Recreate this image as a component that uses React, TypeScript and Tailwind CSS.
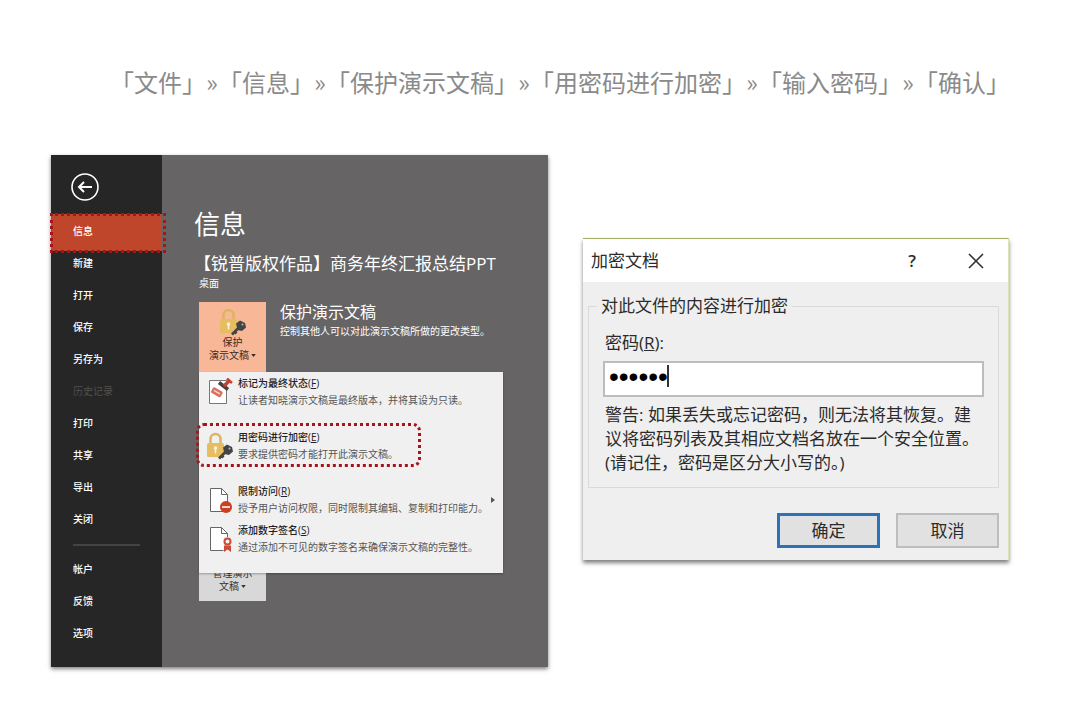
import type { ReactNode } from 'react';

const steps = ['文件', '信息', '保护演示文稿', '用密码进行加密', '输入密码', '确认'];

const mainNav = [
  '信息',
  '新建',
  '打开',
  '保存',
  '另存为',
  '历史记录',
  '打印',
  '共享',
  '导出',
  '关闭',
];
const footNav = ['帐户', '反馈', '选项'];

export default function App() {
  return (
    <div className="min-h-screen bg-white pl-[51px] pr-[71px] pt-16 pb-9 font-['Open_Sans','Noto_Sans_CJK_SC',sans-serif]">
      <Breadcrumb />
      <main className="mt-[55px] grid grid-cols-[497fr_426fr] items-start gap-[35px]">
        <Backstage />
        <EncryptDialog />
      </main>
    </div>
  );
}

function Breadcrumb() {
  return (
    <ol className="flex pl-[59px] font-['Noto_Sans_CJK_SC',sans-serif] text-2xl/9 whitespace-nowrap text-[#8a8a8a]">
      {steps.map((step, i) => (
        <li key={step} className="flex">
          {i > 0 && <span className="flex w-3 justify-center">»</span>}
          <span>「{step}」</span>
        </li>
      ))}
    </ol>
  );
}

function Backstage() {
  return (
    <section className="flex bg-[#666465] text-[10px] text-white shadow-[0_2px_4px_rgba(0,0,0,0.5)]">
      <Sidebar />
      <div className="min-w-0 flex-1 pt-[51px] pl-8">
        <h1 className="text-[26px]/9">信息</h1>
        <h2 className="mt-2.5 text-[17px]/6 whitespace-nowrap">
          【锐普版权作品】商务年终汇报总结PPT
        </h2>
        <div className="pl-[5px]">
          <p className="leading-[14px]">桌面</p>
          <div className="mt-3 flex gap-3.5">
            <div className="relative shrink-0">
              <button className="flex h-[70px] w-[67px] flex-col items-center bg-[#f8b797] pt-1.5 leading-[13px] text-[#3a2a22]">
                <LockIcon className="size-7" />
                <span>保护</span>
                <span className="flex items-center gap-0.5">
                  演示文稿 <Caret />
                </span>
              </button>
              <ProtectMenu />
            </div>
            <div className="whitespace-nowrap">
              <h3 className="text-base/5">保护演示文稿</h3>
              <p className="leading-[18px]">
                控制其他人可以对此演示文稿所做的更改类型。
              </p>
            </div>
          </div>
          <button className="mt-[159px] flex h-[70px] w-[67px] flex-col items-center justify-end bg-[#d9d8d9] pb-2 leading-[13px] text-[#333]">
            <span>管理演示</span>
            <span className="flex items-center gap-0.5">
              文稿 <Caret />
            </span>
          </button>
        </div>
      </div>
    </section>
  );
}

function Sidebar() {
  return (
    <nav className="w-[111px] shrink-0 bg-[#262626] pt-[18px] pb-[18px]">
      <button aria-label="返回" className="ml-5 block size-7">
        <svg viewBox="0 0 28 28" fill="none" stroke="white">
          <circle cx="14" cy="14" r="13" strokeWidth="1.6" />
          <path d="M21 14H8.500M13 9l-5 5 5 5" strokeWidth="2" />
        </svg>
      </button>
      <ul className="mt-3.5">
        {mainNav.map((label) => (
          <NavItem
            key={label}
            label={label}
            active={label === '信息'}
            disabled={label === '历史记录'}
          />
        ))}
      </ul>
      <hr className="mx-[22px] mt-[9px] mb-[7px] border-t-2 border-[#444]" />
      <ul>
        {footNav.map((label) => (
          <NavItem key={label} label={label} />
        ))}
      </ul>
    </nav>
  );
}

function NavItem({
  label,
  active,
  disabled,
}: {
  label: string;
  active?: boolean;
  disabled?: boolean;
}) {
  if (active) {
    return (
      <li className="relative h-8">
        <span className="absolute inset-x-0 -top-px -bottom-1 bg-[#bf462a]" />
        <span className="absolute -top-0.5 -right-1 -bottom-1.5 -left-px border-3 border-dotted border-[#a8141c]" />
        <a
          href="#"
          aria-current="page"
          className="relative flex h-8 items-center pl-[22px] font-medium"
        >
          {label}
        </a>
      </li>
    );
  }
  return (
    <li>
      <a
        href="#"
        aria-disabled={disabled}
        className={
          disabled
            ? 'flex h-8 items-center pl-[22px] text-[#505050]'
            : 'flex h-8 items-center pl-[22px] font-medium'
        }
      >
        {label}
      </a>
    </li>
  );
}

function ProtectMenu() {
  return (
    <div className="absolute top-full left-0 z-10 flex w-[304px] flex-col gap-5 bg-[#f0f0f0] pt-[3px] pb-[17px] shadow-[0_1px_2px_rgba(0,0,0,0.3)]">
      <MenuItem
        icon={<MarkFinalIcon />}
        title="标记为最终状态"
        hotkey="F"
        text="让读者知晓演示文稿是最终版本，并将其设为只读。"
      />
      <div className="relative">
        <MenuItem
          icon={<LockIcon className="size-7" />}
          title="用密码进行加密"
          hotkey="E"
          text="要求提供密码才能打开此演示文稿。"
        />
        <span className="pointer-events-none absolute -top-1.5 -bottom-1 -left-[3px] w-[225px] rounded-lg border-3 border-dotted border-[#a8141c]" />
      </div>
      <div className="flex flex-col gap-[5px]">
        <MenuItem
          icon={<RestrictIcon />}
          title="限制访问"
          hotkey="R"
          text="授予用户访问权限，同时限制其编辑、复制和打印能力。"
          submenu
        />
        <MenuItem
          icon={<SignatureIcon />}
          title="添加数字签名"
          hotkey="S"
          text="通过添加不可见的数字签名来确保演示文稿的完整性。"
        />
      </div>
    </div>
  );
}

function MenuItem({
  icon,
  title,
  hotkey,
  text,
  submenu,
}: {
  icon: ReactNode;
  title: string;
  hotkey: string;
  text: string;
  submenu?: boolean;
}) {
  return (
    <button className="flex w-full items-center pr-2 pl-[7px] text-left leading-[17px] whitespace-nowrap text-[#555]">
      <span className="mr-1 size-7 shrink-0">{icon}</span>
      <span className="flex-1">
        <span className="block font-medium text-[#222]">
          {title}(<u>{hotkey}</u>)
        </span>
        <span className="block">{text}</span>
      </span>
      {submenu && (
        <svg viewBox="0 0 4 6" className="h-1.5 w-1 shrink-0" fill="#555">
          <path d="M0 0l4 3-4 3z" />
        </svg>
      )}
    </button>
  );
}

function EncryptDialog() {
  return (
    <section className="mt-[83px] border-t border-r border-t-[#a3ad6a] border-r-[#d9e4b4] bg-[#efefef] text-[17px] text-[#2b2b2b] shadow-[0_3px_4px_rgba(0,0,0,0.5)]">
      <header className="flex h-[43px] items-center bg-white pl-2">
        <h2 className="flex-1">加密文档</h2>
        <button aria-label="帮助" className="w-16 font-semibold">
          ?
        </button>
        <button aria-label="关闭" className="flex w-16 justify-center">
          <svg
            viewBox="0 0 16 16"
            className="size-4"
            fill="none"
            stroke="#333"
            strokeWidth="1.6"
          >
            <path d="M1 1l14 14M15 1L1 15" />
          </svg>
        </button>
      </header>
      <form className="pt-3 pr-[9px] pb-3 pl-[5px]">
        <fieldset className="border border-[#dadada] px-3.5 pb-3">
          <legend className="-ml-1.5 px-1 leading-6">对此文件的内容进行加密</legend>
          <label htmlFor="password" className="mt-[13px] block pl-0.5 leading-6">
            密码(<u>R</u>):
          </label>
          <div className="relative mt-1.5">
            <input
              id="password"
              type="password"
              defaultValue="secret"
              className="block h-9 w-full border-2 border-[#bdbdbd] bg-white px-1 pb-1 font-['Liberation_Sans',sans-serif] text-[28px] text-black outline-none"
            />
            <span className="absolute top-1 left-16 h-[22px] w-0.5 bg-[#333]" />
          </div>
          <p className="mt-1.5 pl-0.5 leading-6">
            警告: 如果丢失或忘记密码，则无法将其恢复。建议将密码列表及其相应文档名放在一个安全位置。
            <br />
            (请记住，密码是区分大小写的。)
          </p>
        </fieldset>
        <div className="mt-[25px] flex justify-end gap-4">
          <button
            type="submit"
            className="h-[35px] w-[103px] border-3 border-[#2b72b9] bg-[#e1e1e1]"
          >
            确定
          </button>
          <button
            type="button"
            className="h-[35px] w-[103px] border-2 border-[#bdbdbd] bg-[#e1e1e1]"
          >
            取消
          </button>
        </div>
      </form>
    </section>
  );
}

function Caret() {
  return (
    <svg viewBox="0 0 6 4" className="h-[3px] w-[5px]" fill="currentColor">
      <path d="M0 0h6L3 4z" />
    </svg>
  );
}

function LockIcon({ className }: { className: string }) {
  return (
    <svg viewBox="0 0 28 28" className={className} fill="none">
      <path
        d="M4.500 13V7a5 5 0 0 1 10 0v6"
        stroke="#dcb55e"
        strokeWidth="2.500"
      />
      <rect x="1" y="11" width="17" height="14" rx="1.500" fill="#e6bd62" />
      <circle cx="9.500" cy="16" r="1.800" fill="#fff3d0" />
      <path d="M8.700 17h1.600v4.500H8.700z" fill="#fff3d0" />
      <path
        d="M20 19.500l-7 7M15.500 23.500l2 2"
        stroke="#444"
        strokeWidth="2.800"
      />
      <path d="M17 15.500l4-3 5 2.500 1 4.500-4 3.500-4.500-1z" fill="#444" />
      <circle cx="23.500" cy="16.500" r="1" fill="#bbb" />
    </svg>
  );
}

function MarkFinalIcon() {
  return (
    <svg viewBox="0 0 28 28" fill="none">
      <path d="M3.500 2.500h17v23h-17z" fill="#fff" stroke="#777" />
      <g transform="rotate(30 11 14)">
        <rect x="5.500" y="11" width="11" height="6.500" rx="1.500" fill="#d9705f" />
        <path d="M7.500 14.200h7" stroke="#f6d8d0" strokeWidth="1.500" />
      </g>
      <path d="M13 4.500l9 7" stroke="#4a4040" strokeWidth="3.500" />
      <path d="M18 8l5-5" stroke="#c9412d" strokeWidth="3.500" />
      <path d="M21 .500l5 4.500" stroke="#c9412d" strokeWidth="2.500" />
    </svg>
  );
}

function PagePath() {
  return (
    <>
      <path d="M4.500 2.500h11l6 6v17h-17z" fill="#fff" stroke="#666" />
      <path d="M15.500 2.500v6h6" stroke="#666" />
    </>
  );
}

function RestrictIcon() {
  return (
    <svg viewBox="0 0 28 28" fill="none">
      <PagePath />
      <circle cx="20" cy="21" r="6" fill="#cc3f22" />
      <path d="M16 21h8" stroke="#f4d9c8" strokeWidth="2" />
    </svg>
  );
}

function SignatureIcon() {
  return (
    <svg viewBox="0 0 28 28" fill="none">
      <PagePath />
      <path d="M17.500 12h8v15h-8z" fill="#f0f0f0" />
      <circle cx="21.500" cy="16.500" r="3" stroke="#cc4a38" strokeWidth="2" />
      <path d="M18 20.500h7v6.500l-3.500-2.500L18 27z" fill="#cc4a38" />
    </svg>
  );
}
